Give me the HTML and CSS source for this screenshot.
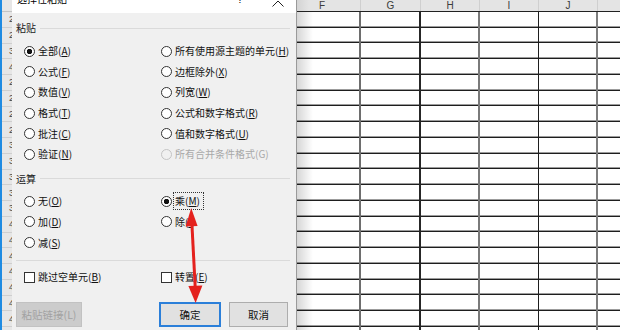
FILE: index.html
```html
<!DOCTYPE html>
<html lang="zh-CN">
<head>
<meta charset="utf-8">
<title>选择性粘贴</title>
<link rel="stylesheet" href="styles.css">
</head>
<body>
<div class="screen">
  <div class="edge"></div>
  <div class="rowhdr">
    <div class="rh-top"></div>
    <div class="rh"><span>2</span></div><div class="rh"><span>2</span></div><div class="rh"><span>3</span></div>
    <div class="rh"><span>4</span></div><div class="rh"><span>2</span></div><div class="rh"><span>2</span></div>
    <div class="rh"><span>2</span></div><div class="rh"><span>2</span></div><div class="rh"><span>3</span></div>
    <div class="rh"><span>3</span></div><div class="rh"><span>3</span></div><div class="rh"><span>3</span></div>
    <div class="rh"><span>3</span></div><div class="rh"><span>4</span></div><div class="rh"><span>4</span></div>
    <div class="rh"><span>4</span></div><div class="rh"><span>4</span></div><div class="rh"><span>4</span></div>
    <div class="rh"><span>4</span></div><div class="rh"><span>4</span></div>
  </div>

  <div class="dialog">
    <div class="titlebar">
      <span class="title">选择性粘贴</span>
      <span class="help">?</span>
      <svg class="close" width="12" height="7" viewBox="0 0 12 7"><path d="M0.5 6.5 L6 1 L11.5 6.5" fill="none" stroke="#222" stroke-width="1"/></svg>
    </div>
    <div class="body">
      <div class="group"><span class="glabel">粘贴</span><span class="gline"></span></div>
      <div class="options">
        <div class="opt"><span class="radio on"></span><span>全部(<u>A</u>)</span></div>
        <div class="opt"><span class="radio"></span><span>所有使用源主题的单元(<u>H</u>)</span></div>
        <div class="opt"><span class="radio"></span><span>公式(<u>F</u>)</span></div>
        <div class="opt"><span class="radio"></span><span>边框除外(<u>X</u>)</span></div>
        <div class="opt"><span class="radio"></span><span>数值(<u>V</u>)</span></div>
        <div class="opt"><span class="radio"></span><span>列宽(<u>W</u>)</span></div>
        <div class="opt"><span class="radio"></span><span>格式(<u>T</u>)</span></div>
        <div class="opt"><span class="radio"></span><span>公式和数字格式(<u>R</u>)</span></div>
        <div class="opt"><span class="radio"></span><span>批注(<u>C</u>)</span></div>
        <div class="opt"><span class="radio"></span><span>值和数字格式(<u>U</u>)</span></div>
        <div class="opt"><span class="radio"></span><span>验证(<u>N</u>)</span></div>
        <div class="opt disabled"><span class="radio"></span><span>所有合并条件格式(G)</span></div>
      </div>

      <div class="group g2"><span class="glabel">运算</span><span class="gline"></span></div>
      <div class="options ops">
        <div class="opt"><span class="radio"></span><span>无(<u>O</u>)</span></div>
        <div class="opt"><span class="radio on"></span><span class="focus">乘(<u>M</u>)</span></div>
        <div class="opt"><span class="radio"></span><span>加(<u>D</u>)</span></div>
        <div class="opt"><span class="radio"></span><span>除(<u>I</u>)</span></div>
        <div class="opt"><span class="radio"></span><span>减(<u>S</u>)</span></div>
      </div>

      <div class="sep"></div>
      <div class="options checks">
        <div class="opt"><span class="check"></span><span>跳过空单元(<u>B</u>)</span></div>
        <div class="opt"><span class="check"></span><span>转置(<u>E</u>)</span></div>
      </div>

      <div class="buttons">
        <button class="btn btn-disabled">粘贴链接(L)</button>
        <button class="btn btn-ok">确定</button>
        <button class="btn btn-cancel">取消</button>
      </div>
    </div>
  </div>

  <div class="sheet">
    <div class="colhdr">
      <div class="ch ch-f">F</div>
      <div class="ch">G</div>
      <div class="ch">H</div>
      <div class="ch">I</div>
      <div class="ch">J</div>
      <div class="ch ch-last"></div>
    </div>
    <div class="cells">
      <div class="col col-f"></div>
      <div class="col col-g"></div>
      <div class="col col-h"></div>
      <div class="col col-i"></div>
      <div class="col col-j"></div>
      <div class="col col-k"></div>
    </div>
  </div>

  <svg class="arrow" width="620" height="330" viewBox="0 0 620 330">
    <line x1="191.8" y1="222" x2="195.3" y2="289" stroke="#e4221e" stroke-width="3"/>
    <path d="M191.2 208 L197.6 226 L185.6 226.6 Z" fill="#e4221e"/>
    <path d="M195.6 303 L188.4 286 L202.4 285.4 Z" fill="#e4221e"/>
  </svg>
</div>
</body>
</html>
```

FILE: styles.css
```css
html, body {
  margin: 0;
  padding: 0;
  background: #fff;
}

.screen {
  position: relative;
  width: 620px;
  height: 330px;
  display: flex;
  overflow: hidden;
  font-family: "Noto Sans CJK SC", "Noto Sans", sans-serif;
  font-size: 10px;
  color: #111;
}

.edge {
  width: 2px;
  flex: none;
  background: #1f8be2;
}

.rowhdr {
  width: 10px;
  flex: none;
  background: #e6e6e6;
  font-family: "Liberation Sans", sans-serif;
  font-size: 9px;
  color: #444;
}

.rh-top {
  height: 12px;
  box-sizing: border-box;
  border-bottom: 1px solid #c4c4c4;
}

.rh {
  height: 15.75px;
  box-sizing: border-box;
  border-bottom: 1px solid #cfcfcf;
  display: flex;
  justify-content: flex-end;
  align-items: center;
  overflow: hidden;
}

.rh span {
  margin-right: -2px;
}

/* dialog */
.dialog {
  width: 284px;
  flex: none;
  background: #f0f0f0;
  border-right: 1px solid #9a9a9a;
}

.titlebar {
  height: 13px;
  background: #fff;
  display: flex;
  align-items: flex-start;
  overflow: hidden;
}

.title {
  margin-left: 5px;
  margin-top: -7px;
  line-height: 12px;
  font-size: 10px;
  color: #000;
}

.help {
  margin-left: auto;
  margin-top: -7px;
  line-height: 12px;
  font-family: "Liberation Sans", sans-serif;
  font-size: 11px;
  color: #222;
}

.close {
  margin-left: 29px;
  margin-right: 12px;
  display: block;
}

.body {
  padding: 0 6px 0 4px;
}

.group {
  display: flex;
  align-items: center;
  gap: 4px;
  height: 14px;
  margin-top: 8px;
}

.glabel {
  line-height: 14px;
  color: #222;
}

.gline {
  flex: 1;
  height: 1px;
  background: #dadada;
}

.options {
  display: grid;
  grid-template-columns: 137px 1fr;
  grid-auto-rows: 20.6px;
  margin-left: 8px;
  margin-top: 6px;
}

.opt {
  display: flex;
  align-items: center;
  gap: 3px;
  line-height: 14px;
  white-space: nowrap;
}

.opt u {
  text-decoration-thickness: 1px;
  text-underline-offset: 1px;
}

.radio {
  width: 11px;
  height: 11px;
  flex: none;
  box-sizing: border-box;
  border: 1px solid #333;
  border-radius: 50%;
  background: #fff;
}

.radio.on {
  background: radial-gradient(circle, #111 0 2.4px, #fff 3px);
}

.disabled {
  color: #a8a8a8;
}

.disabled .radio {
  border-color: #c4c4c4;
  background: #f0f0f0;
}

.focus {
  outline: 1px dotted #333;
  outline-offset: 0;
  padding: 1px 3px 1px 1px;
  margin-left: -1px;
}

.g2 {
  margin-top: 7px;
}

.ops {
  grid-auto-rows: 20.9px;
  margin-top: 5px;
}

.sep {
  height: 1px;
  background: #dadada;
  margin-top: 7px;
}

.checks {
  grid-auto-rows: 20px;
  margin-top: 6px;
}

.check {
  width: 11px;
  height: 11px;
  flex: none;
  box-sizing: border-box;
  border: 1px solid #333;
  background: #fff;
}

.buttons {
  display: flex;
  margin-top: 15px;
}

.btn {
  height: 25px;
  box-sizing: border-box;
  padding: 0;
  font-family: "Noto Sans CJK SC", "Noto Sans", sans-serif;
  font-size: 10.5px;
  line-height: 14px;
  color: #111;
  background: #e1e1e1;
  border: 1px solid #adadad;
}

.btn-disabled {
  width: 66px;
  background: #cccccc;
  border-color: #c2c2c2;
  color: #a2a2a2;
}

.btn-ok {
  width: 62px;
  margin-left: 77px;
  border: 2px solid #2b7fd9;
}

.btn-cancel {
  width: 59px;
  margin-left: 8px;
}

/* sheet */
.sheet {
  flex: 1;
  display: flex;
  flex-direction: column;
  background: #fff;
}

.colhdr {
  height: 12px;
  flex: none;
  display: grid;
  grid-template-columns: 64px 60px 59px 59px 59px 1fr;
  background: #e4e4e4;
  box-sizing: border-box;
  border-bottom: 1px solid #222;
  font-family: "Liberation Sans", sans-serif;
  font-size: 10px;
  line-height: 11px;
  color: #3c3c3c;
}

.ch {
  text-align: center;
  box-sizing: border-box;
  border-right: 1px solid #cfcfcf;
}

.ch-f {
  text-align: left;
  padding-left: 22px;
  background: linear-gradient(to right, #d4d4d4, #e4e4e4 12px);
}

.ch-last {
  border-right: none;
}

.cells {
  flex: 1;
  display: grid;
  grid-template-columns: 64px 60px 59px 59px 59px 1fr;
  background: repeating-linear-gradient(to bottom,
    #fff 0 13.6px,
    #9c9c9c 13.6px 14.6px,
    #1e1e1e 14.6px 15.75px);
}

.col {
  box-sizing: border-box;
}

.col-f {
  border-right: 2px solid #6e6e6e;
  background: linear-gradient(to right, rgba(0, 0, 0, 0.16), rgba(0, 0, 0, 0) 16px);
}

.col-g {
  border-right: 2px solid #262626;
}

.col-h {
  border-right: 2px solid #7a7a7a;
}

.col-i {
  border-right: 1px solid #1e1e1e;
}

.col-j {
  border-right: 2px solid #7e7e7e;
}

.arrow {
  position: absolute;
  left: 0;
  top: 0;
  pointer-events: none;
}
```
